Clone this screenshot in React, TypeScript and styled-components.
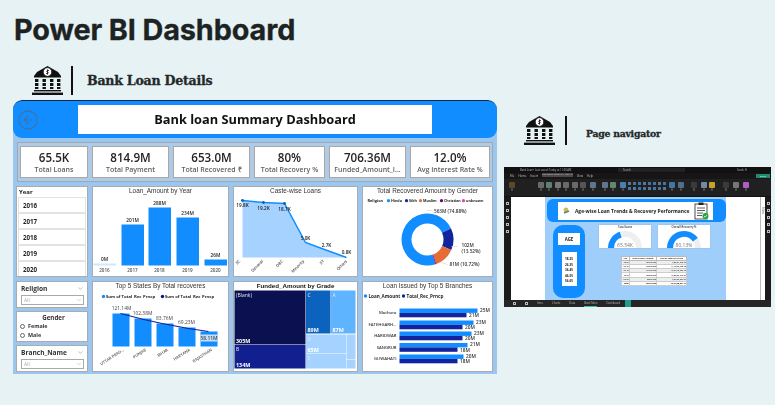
import * as React from 'react';
import styled, { createGlobalStyle } from 'styled-components';
import { ChevronDown, CircleArrowLeft } from 'lucide-react';

const BLUE = '#118dff';
const NAVY = '#12239e';
const LIGHT = '#a5d2ff';
const UI_FONT = '"Open Sans", "Liberation Sans", sans-serif';

const GlobalStyle = createGlobalStyle`
  html, body {
    margin: 0;
    padding: 0;
    background: #e6f2f3;
  }
  * { box-sizing: border-box; }
`;

const Page = styled.div`
  width: 775px;
  height: 405px;
  overflow: hidden;
  padding: 10px 4px 0 13px;
  font-family: ${UI_FONT};
`;

const PageTitle = styled.h1`
  margin: 0 0 0 1px;
  height: 40px;
  font: 700 28.8px/40px Inter, "Liberation Sans", sans-serif;
  letter-spacing: -0.1px;
  color: #1d2222;
  -webkit-text-stroke: 0.3px #1d2222;
`;

const Columns = styled.div`
  display: flex;
  gap: 7px;
  align-items: flex-start;
`;

const LeftColumn = styled.section`
  width: 484px;
`;

const RightColumn = styled.section`
  width: 267px;
  padding-top: 66px;
`;

const SectionHead = styled.div`
  display: flex;
  align-items: center;
  height: 50px;
  padding: 16px 0 5px 19px;
`;

const Divider = styled.div<{ $left: number; $right: number }>`
  width: 2px;
  height: 29px;
  margin: 0 ${(p) => p.$right}px 0 ${(p) => p.$left}px;
  background: #111;
`;

const SectionTitle = styled.h2<{ $size: number; $drop?: number }>`
  margin: ${(p) => p.$drop ?? 0}px 0 0;
  font: 700 ${(p) => p.$size}px "DejaVu Serif", "Liberation Serif", serif;
  letter-spacing: -0.25px;
  color: #24282a;
  -webkit-text-stroke: 0.3px #24282a;
`;

const RightHead = styled(SectionHead)`
  height: 29px;
  margin-bottom: 22px;
  padding: 0 0 0 20px;
`;

const BankIcon = () => (
  <svg width="31" height="29" viewBox="0 0 31 29" style={{ flex: 'none' }}>
    <path d="M15.5 0 L26 6 L29 10 L29 11.5 L2 11.5 L2 10 L5 6 Z" fill="#111" />
    <circle cx="15.5" cy="6" r="4.4" fill="#fff" stroke="#111" strokeWidth="1" />
    <path d="M15.5 3.4 V8.6 M17 4.6 C15 3.8 13.8 5.6 15.5 6 C17.2 6.4 16 8.2 14 7.4" stroke="#111" strokeWidth="0.8" fill="none" />
    {[3, 10.5, 18, 25].map((x) => (
      <path key={x} d="M0 13 H3.4 V16 H0 Z M0 17 H3.4 V20 H0 Z M0 21 H3.4 V23 H0 Z" transform={`translate(${x} 0)`} fill="#111" />
    ))}
    <rect x="2" y="24" width="27" height="1.4" fill="#111" />
    <rect x="0" y="26.6" width="31" height="2.4" fill="#111" />
  </svg>
);

/* dashboard shell */

const Dashboard = styled.div`
  width: 484px;
  height: 274px;
  background: #9cc6ee;
  border-radius: 9px 9px 0 0;
  overflow: hidden;
  filter: blur(0.4px);
`;

const Banner = styled.header`
  display: flex;
  align-items: center;
  height: 38px;
  padding-left: 4px;
  background: ${BLUE};
  border-top: 1px solid #10264a;
  border-radius: 9px;
`;

const BackButton = styled.div`
  display: flex;
  width: 61px;
  color: #44709d;
`;

const BannerTitle = styled.div`
  width: 354px;
  height: 29px;
  background: #fff;
  text-align: center;
  font: 700 12.8px/29px ${UI_FONT};
  color: #111;
`;

const KpiStrip = styled.div`
  display: flex;
  gap: 4px;
  width: 476px;
  height: 40px;
  margin: 4px 0 0 4px;
  padding: 3px 2px;
  background: #a9cdef;
  border: 1px solid #a3a8ad;
`;

const KpiCard = styled.div<{ $w: number }>`
  width: ${(p) => p.$w}px;
  height: 32px;
  padding-top: 3px;
  background: #fff;
  border: 1px solid #a8a8a8;
  box-shadow: 0 0 0 0.5px #c4c4c4;
  text-align: center;
  overflow: hidden;
`;

const KpiValue = styled.div`
  font: 600 11.6px/15px ${UI_FONT};
  color: #252423;
`;

const KpiLabel = styled.div`
  font: 600 7px/10px ${UI_FONT};
  color: #605e5c;
  white-space: nowrap;
`;

const MainGrid = styled.div`
  display: grid;
  grid-template-columns: 72px 137px 125px 131px;
  grid-template-rows: 91px 91px;
  gap: 4px;
  margin: 4px 0 0 3px;
`;

const Card = styled.div`
  background: #fff;
  border: 1.5px solid #a9acaf;
  overflow: hidden;
`;

const ChartTitle = styled.div<{ $strong?: boolean }>`
  height: 8px;
  text-align: center;
  white-space: nowrap;
  font: ${(p) => (p.$strong ? '700 6.2px' : '400 6.4px')}/8px "Liberation Sans", sans-serif;
  color: ${(p) => (p.$strong ? '#111' : '#333')};
`;

const ChartSvg = styled.svg`
  display: block;
`;

const Label = styled.text<{ $size?: number; $weight?: number; $color?: string }>`
  font-family: ${UI_FONT};
  font-size: ${(p) => p.$size ?? 5}px;
  font-weight: ${(p) => p.$weight ?? 600};
  fill: ${(p) => p.$color ?? '#252423'};
`;

/* slicers */

const YearList = styled.div`
  display: flex;
  flex-direction: column;
  padding: 1px 1px;
`;

const SlicerHead = styled.div`
  height: 9px;
  padding-left: 1px;
  font: 700 6px/9px ${UI_FONT};
  color: #252423;
`;

const YearItem = styled.div`
  height: 16px;
  padding-left: 4px;
  border: 1px solid #e3e3e3;
  font: 700 6.2px/15px ${UI_FONT};
  color: #252423;
`;

const FilterStack = styled.div`
  display: flex;
  flex-direction: column;
  gap: 3px;
`;

const DropSlicer = styled(Card)`
  height: 27px;
  padding: 1px 3px 0 4px;
`;

const DropHead = styled.div`
  display: flex;
  justify-content: space-between;
  align-items: center;
  height: 11px;
  font: 700 6.6px/11px ${UI_FONT};
  color: #333;
  svg { color: #999; }
`;

const DropBox = styled.div`
  display: flex;
  justify-content: space-between;
  align-items: center;
  height: 10px;
  margin-top: 1px;
  padding: 0 1px 0 2px;
  border: 1px solid #aaa;
  font: 400 5px/8px ${UI_FONT};
  color: #aaa;
`;

const GenderSlicer = styled(Card)`
  height: 31px;
  padding: 1px 0 0 3px;
`;

const GenderTitle = styled.div`
  text-align: center;
  font: 700 6.2px/9px ${UI_FONT};
  color: #333;
`;

const RadioRow = styled.div`
  display: flex;
  align-items: center;
  gap: 3px;
  height: 9px;
  font: 700 5.4px/9px ${UI_FONT};
  color: #333;
`;

const RadioDot = styled.span`
  width: 5px;
  height: 5px;
  border: 0.6px solid #666;
  border-radius: 50%;
`;

/* page navigator picture */

const AppWindow = styled.div`
  display: flex;
  flex-direction: column;
  width: 267px;
  height: 140px;
  background: #1b1b1b;
  filter: blur(0.45px);
  overflow: hidden;
`;

const TitleBar = styled.div`
  display: flex;
  align-items: center;
  height: 6px;
  padding: 0 3px 0 3px;
  background: #111;
  font: 400 2.6px/6px ${UI_FONT};
  color: #b5b5b5;
`;

const TitleText = styled.span`
  width: 111px;
  padding-left: 13px;
  white-space: nowrap;
`;

const SearchBox = styled.span`
  width: 67px;
  height: 4px;
  padding-left: 5px;
  background: #222;
  line-height: 4px;
`;

const UserBits = styled.span`
  margin-left: 52px;
  white-space: nowrap;
`;

const MenuRow = styled.div`
  position: relative;
  display: flex;
  gap: 4px;
  height: 6px;
  padding-left: 6px;
  background: #161616;
  font: 400 2.8px/6px ${UI_FONT};
  color: #c8c8c8;
`;

const SaveTip = styled.span`
  width: 31px;
  height: 4px;
  background: #4a4a4a;
  font-size: 2.2px;
  line-height: 4px;
  text-align: center;
  white-space: nowrap;
`;

const ShareButton = styled.span`
  position: absolute;
  right: 1px;
  top: 1px;
  width: 14px;
  height: 4px;
  background: #1f8a70;
  font-size: 2.4px;
  line-height: 4px;
  text-align: center;
  color: #dff;
`;

const Ribbon = styled.div`
  display: flex;
  height: 18px;
  padding-top: 2px;
  background: #202020;
  border-bottom: 1px solid #111;
`;

const RibbonTool = styled.div<{ $c: string; $gap: number }>`
  width: 6px;
  height: 6px;
  margin: 1px 0 0 ${(p) => p.$gap}px;
  background: ${(p) => p.$c};
  border-radius: 1px;
  box-shadow: 0 4.5px 0 -2px #5c5c5c;
  flex: none;
`;

const RibbonGrid = styled.div`
  display: grid;
  grid-template-columns: repeat(8, 3px);
  grid-auto-rows: 3px;
  gap: 2px;
  margin: 1px 0 0 2px;
  flex: none;
`;

const RibbonDot = styled.i<{ $c: string }>`
  display: block;
  background: ${(p) => p.$c};
`;

const WorkArea = styled.div`
  display: flex;
  height: 103px;
`;

const SideRail = styled.div<{ $w: number }>`
  display: flex;
  flex-direction: column;
  align-items: center;
  gap: 4px;
  width: ${(p) => p.$w}px;
  padding-top: 5px;
  background: #1b1b1b;
  flex: none;
`;

const RailIcon = styled.i`
  display: block;
  width: 3px;
  height: 3px;
  border: 0.6px solid #bbb;
  flex: none;
`;

const ReportPage = styled.div`
  position: relative;
  display: flex;
  width: 254px;
  padding-left: 34px;
  background: #fff;
`;

const FiltersPane = styled.div`
  position: absolute;
  top: 0;
  right: 0;
  width: 5px;
  height: 100%;
  padding-top: 10px;
  border-left: 0.5px solid #bbb;
  writing-mode: vertical-rl;
  font: 400 2.6px/4px ${UI_FONT};
  color: #555;
`;

const BlueCanvas = styled.div`
  width: 181px;
  background: #9fcefb;
  padding: 2px 0 0 2px;
`;

const MiniBanner = styled.div`
  display: flex;
  align-items: center;
  width: 179px;
  height: 23px;
  padding-left: 11px;
  background: ${BLUE};
  border-radius: 6px;
`;

const MiniTitleBox = styled.div`
  display: flex;
  align-items: center;
  width: 155px;
  height: 18px;
  padding-left: 5px;
  background: #fff;
  font: 700 4.9px/18px ${UI_FONT};
  color: #222;
  white-space: nowrap;
`;

const MiniTitle = styled.span`
  margin-left: 5px;
  width: 120px;
`;

const MiniBody = styled.div`
  display: flex;
  margin: 3px 0 0 6px;
`;

const AgePill = styled.div`
  display: flex;
  flex-direction: column;
  align-items: center;
  width: 32px;
  height: 73px;
  padding-top: 8px;
  background: ${BLUE};
  border-radius: 10px;
  flex: none;
`;

const AgeBox = styled.div`
  width: 22px;
  height: 12px;
  background: #fff;
  text-align: center;
  font: 700 4.4px/12px ${UI_FONT};
  color: #222;
`;

const AgeList = styled.div`
  width: 15px;
  height: 34px;
  margin-top: 7px;
  padding-top: 5px;
  background: #fff;
  text-align: center;
  font: 700 3.1px/5.6px ${UI_FONT};
  color: #222;
`;

const MiniContent = styled.div`
  display: flex;
  flex-direction: column;
  margin-left: 14px;
`;

const GaugeRow = styled.div`
  display: flex;
  gap: 7px;
`;

const GaugeCard = styled.div`
  width: 52px;
  height: 23px;
  background: #fff;
  box-shadow: 0 0 1px #999;
  text-align: center;
  font: 600 2.7px/4px ${UI_FONT};
  color: #333;
  overflow: hidden;
`;

const MiniTable = styled.table`
  width: 66px;
  height: 30px;
  margin: 8px 0 0 22px;
  border-collapse: collapse;
  background: #eee;
  font: 700 2px/3px ${UI_FONT};
  color: #444;
  th { background: #fff; color: #222; border: 0.3px solid #bbb; padding: 0; white-space: nowrap; }
  td { border: 0.3px solid #ccc; padding: 0; text-align: right; }
  tr:nth-child(even) td { background: #fff; }
  tr:last-child td { background: #fff; color: #222; }
`;

const BottomBar = styled.div`
  display: flex;
  align-items: center;
  gap: 9px;
  height: 7px;
  padding-left: 9px;
  background: #262626;
  font: 400 2.7px/7px ${UI_FONT};
  color: #bbb;
`;

const PageTab = styled.span<{ $active?: boolean }>`
  height: 7px;
  border-bottom: ${(p) => (p.$active ? '0.7px solid #2ec4a5' : 'none')};
`;

const AddTab = styled.span`
  width: 6px;
  height: 7px;
  margin-left: -4px;
  background: #1f9d86;
`;

/* chart helpers */

function svgBox(x: number, y: number, w: number, h: number) {
  return { viewBox: `${x} ${y} ${w} ${h}`, width: w, height: h };
}

function arc(cx: number, cy: number, r0: number, r1: number, a0: number, a1: number) {
  const pt = (r: number, a: number) => {
    const t = (a * Math.PI) / 180;
    return `${(cx + r * Math.sin(t)).toFixed(2)} ${(cy - r * Math.cos(t)).toFixed(2)}`;
  };
  const large = a1 - a0 > 180 ? 1 : 0;
  return `M${pt(r1, a0)} A${r1} ${r1} 0 ${large} 1 ${pt(r1, a1)} L${pt(r0, a1)} A${r0} ${r0} 0 ${large} 0 ${pt(r0, a0)} Z`;
}

const YearBars = () => {
  const bars = [
    { x: 94, top: 264, year: '2016', v: '0M', fill: '#cfe7ff', ly: 261 },
    { x: 122, top: 225, year: '2017', v: '201M', fill: BLUE, ly: 222.5 },
    { x: 149, top: 208, year: '2018', v: '288M', fill: BLUE, ly: 205.5 },
    { x: 177, top: 218, year: '2019', v: '234M', fill: BLUE, ly: 215.5 },
    { x: 205, top: 260, year: '2020', v: '26M', fill: BLUE, ly: 257.5 },
  ];
  return (
    <ChartSvg {...svgBox(93.5, 195.5, 134, 80)}>
      {bars.map((b) => (
        <g key={b.year}>
          <rect x={b.x} y={b.top} width="22.5" height={266 - b.top} fill={b.fill} />
          <Label x={b.x + 11} y={b.ly} textAnchor="middle" $size={4.8}>{b.v}</Label>
          <Label x={b.x + 11} y={272} textAnchor="middle" $size={4.6} $color="#555">{b.year}</Label>
        </g>
      ))}
    </ChartSvg>
  );
};

const CasteArea = () => {
  const pts = [[243, 201], [264, 203], [285, 204], [306, 243], [325, 250], [347, 258]];
  const line = pts.map((p) => p.join(' ')).join(' L');
  const labels = [
    ['19.8K', 243, 207.5], ['19.2K', 264, 210.5], ['18.7K', 285, 211.5],
    ['5.0K', 306, 240.5], ['2.7K', 327, 247.5], ['0.8K', 347, 254.5],
  ] as const;
  const axis = [
    ['SC', 241, 262], ['General', 264, 262], ['OBC', 284, 262],
    ['Minority', 305, 262], ['ST', 325, 262], ['Others', 348, 262],
  ] as const;
  return (
    <ChartSvg {...svgBox(234.5, 195.5, 122, 80)}>
      <path d={`M${line} L243 258 Z`} fill={LIGHT} />
      <path d={`M${line}`} fill="none" stroke={BLUE} strokeWidth="1.5" />
      {pts.slice(0, 3).map((p) => (
        <circle key={p[0]} cx={p[0]} cy={p[1]} r="1.4" fill="#0f5fb0" />
      ))}
      {labels.map(([t, x, y]) => (
        <Label key={t} x={x} y={y} textAnchor="middle" $size={4.7} $color="#222">{t}</Label>
      ))}
      {axis.map(([t, x, y]) => (
        <Label key={t} x={x} y={y} textAnchor="end" $size={4} $color="#444" transform={`rotate(-45 ${x} ${y})`}>{t}</Label>
      ))}
    </ChartSvg>
  );
};

const GenderDonut = () => {
  const legend = [
    ['Hindu', 389, BLUE], ['Sikh', 407, NAVY], ['Muslim', 421, '#e66c37'],
    ['Christian', 442, '#6b007b'], ['unknown', 464, '#e044a7'],
  ] as const;
  return (
    <ChartSvg {...svgBox(363.5, 195.5, 128, 80)}>
      <Label x={368} y={202.7} $size={3.9} $weight={700}>Religion</Label>
      {legend.map(([t, x, c]) => (
        <g key={t}>
          <circle cx={x} cy={201.2} r="1.6" fill={c} />
          <Label x={x + 2.5} y={202.7} $size={3.7} $weight={700}>{t}</Label>
        </g>
      ))}
      <path d={arc(428, 240, 16, 26, -198, 65)} fill={BLUE} />
      <path d={arc(428, 240, 16, 26, 65, 114)} fill={NAVY} />
      <path d={arc(428, 240, 16, 26, 114, 160)} fill="#e66c37" />
      <path d={arc(428, 240, 16, 26, 160, 162)} fill="#6b007b" />
      <path d="M427 211 L433 211 M452 247 L458 247 M442 263 L448 265" stroke="#ddd" strokeWidth="0.8" fill="none" />
      <Label x={434.5} y={213} $size={4.7} $color="#333">563M (74.88%)</Label>
      <Label x={462} y={247} $size={4.7} $color="#333">102M</Label>
      <Label x={462} y={253} $size={4.7} $color="#333">(13.52%)</Label>
      <Label x={450} y={266.5} $size={4.7} $color="#333">81M (10.72%)</Label>
    </ChartSvg>
  );
};

const StateBars = () => {
  const bars = [
    { x: 113, top: 314, v: '121.14M', lx: 122, ly: 310.5, name: 'UTTAR PRAD...' },
    { x: 135, top: 319, v: '102.38M', lx: 143, ly: 315, name: 'PUNJAB' },
    { x: 157, top: 324, v: '83.76M', lx: 165, ly: 320, name: 'BIHAR' },
    { x: 179, top: 328, v: '69.23M', lx: 187, ly: 324, name: 'HARYANA' },
    { x: 201, top: 332, v: '', lx: 0, ly: 0, name: 'RAJASTHAN' },
  ];
  return (
    <ChartSvg {...svgBox(93.5, 290.5, 134, 80)}>
      <circle cx="104" cy="297" r="1.7" fill={BLUE} />
      <Label x={106.5} y={298.7} $size={4.2} $weight={700}>Sum of Total_Rec_Prncp</Label>
      <circle cx="163" cy="297" r="1.7" fill="#0a148a" />
      <Label x={165.5} y={298.7} $size={4.2} $weight={700}>Sum of Total_Rec_Prncp</Label>
      {bars.map((b) => (
        <g key={b.name}>
          <rect x={b.x} y={b.top} width="17" height={347 - b.top} fill={BLUE} />
          {b.v && <Label x={b.lx} y={b.ly} textAnchor="middle" $size={4.9} $weight={400} $color="#444">{b.v}</Label>}
          <Label x={b.x + 12} y={351} textAnchor="end" $size={4} $color="#555" transform={`rotate(-33 ${b.x + 12} 351)`}>{b.name}</Label>
        </g>
      ))}
      <rect x="201" y="335" width="17" height="7" fill="#c4e0fb" />
      <Label x={209.5} y={340.5} textAnchor="middle" $size={4.9} $color="#444">58.11M</Label>
      <path d="M121 314 C150 322 180 328 209 332" fill="none" stroke={NAVY} strokeWidth="1.1" />
    </ChartSvg>
  );
};

const GradeTreemap = () => {
  const cells = [
    { x: 235, y: 291, w: 71, h: 54, c: '#0a1050', name: '(Blank)', v: '305M' },
    { x: 235, y: 345.5, w: 71, h: 23.5, c: '#121f8f', name: 'B', v: '134M' },
    { x: 306.5, y: 291, w: 24.5, h: 43, c: '#0b63bd', name: 'C', v: '89M' },
    { x: 331.5, y: 291, w: 24.5, h: 43, c: '#5fb4ff', name: 'A', v: '87M' },
    { x: 306.5, y: 335, w: 40, h: 19, c: LIGHT, name: 'D', v: '65M' },
    { x: 306.5, y: 354.5, w: 40, h: 14.5, c: LIGHT, name: 'E', v: '' },
    { x: 347, y: 335, w: 9, h: 25, c: LIGHT, name: '', v: '' },
    { x: 347, y: 360.5, w: 9, h: 8.5, c: LIGHT, name: '', v: '' },
  ];
  return (
    <ChartSvg {...svgBox(234.5, 290.5, 122, 80)}>
      {cells.map((c) => (
        <g key={`${c.x}-${c.y}`}>
          <rect x={c.x} y={c.y} width={c.w} height={c.h} fill={c.c} />
          {c.name && <Label x={c.x + 1.5} y={c.y + 6} $size={5} $weight={400} $color="#dfe8f5">{c.name}</Label>}
          {c.v && <Label x={c.x + 1.5} y={c.y + c.h - 1.5} $size={5.4} $weight={700} $color="#fff">{c.v}</Label>}
        </g>
      ))}
    </ChartSvg>
  );
};

const BranchBars = () => {
  const rows = [
    { name: 'Mathura', y: 309, a: 478, b: 467, av: '25M', bv: '21M' },
    { name: 'FATEHGARH...', y: 321, a: 474, b: 463, av: '23M', bv: '20M' },
    { name: 'HARIDWAR', y: 332, a: 472, b: 463, av: '23M', bv: '20M' },
    { name: 'SANGRUR', y: 343.5, a: 468, b: 458, av: '21M', bv: '18M' },
    { name: 'GUWAHATI', y: 355, a: 464, b: 458, av: '20M', bv: '18M' },
  ];
  return (
    <ChartSvg {...svgBox(363.5, 290.5, 128, 80)}>
      <circle cx="366" cy="296.5" r="1.7" fill={BLUE} />
      <Label x={369} y={298.2} $size={4.6} $weight={700}>Loan_Amount</Label>
      <circle cx="404" cy="296.5" r="1.7" fill={NAVY} />
      <Label x={407} y={298.2} $size={4.6} $weight={700}>Total_Rec_Prncp</Label>
      {rows.map((r) => (
        <g key={r.name}>
          <rect x="400" y={r.y} width={r.a - 400} height="4.4" fill={BLUE} />
          <rect x="400" y={r.y + 4.4} width={r.b - 400} height="4.4" fill={NAVY} />
          <Label x={397} y={r.y + 5.8} textAnchor="end" $size={4.2} $color="#333">{r.name}</Label>
          <Label x={r.a + 2.5} y={r.y + 3} $size={4.8} $color="#333">{r.av}</Label>
          <Label x={r.b + 2.5} y={r.y + 8.6} $size={4.8} $color="#333">{r.bv}</Label>
        </g>
      ))}
    </ChartSvg>
  );
};

const Gauge = ({ value, sweep }: { value: string; sweep: number }) => (
  <svg width="52" height="19" viewBox="0 0 52 19" style={{ display: 'block' }}>
    <path d={arc(26, 19, 11, 17, -90, 90)} fill="#efefef" />
    <path d={arc(26, 19, 11, 17, -90, -90 + sweep)} fill={BLUE} />
    <Label x={26} y={18} textAnchor="middle" $size={5} $weight={400} $color="#777">{value}</Label>
  </svg>
);

const ClipboardIcon = () => (
  <svg width="15" height="18" viewBox="0 0 15 18" style={{ flex: 'none', marginLeft: -1 }}>
    <rect x="1" y="2" width="12" height="15" fill="#fff" stroke="#222" strokeWidth="0.8" />
    <rect x="4.5" y="0.5" width="5" height="2.5" fill="#222" />
    <path d="M3 6 H11 M3 8.5 H11 M3 11 H9 M3 13.5 H8" stroke="#333" strokeWidth="0.8" />
    <circle cx="11.5" cy="14" r="3" fill="#22a83a" />
    <path d="M10 14 L11.2 15.2 L13 13" stroke="#fff" strokeWidth="0.7" fill="none" />
  </svg>
);

const TOOLS_LEFT = [
  { gap: 5, c: '#5a4a25' }, { gap: 23, c: '#6a6a6a' }, { gap: 2, c: '#5f7f70' },
  { gap: 3, c: '#777' }, { gap: 2, c: '#6a6a6a' }, { gap: 3, c: '#6a6a6a' },
  { gap: 2, c: '#555' }, { gap: 4, c: '#5f7590' }, { gap: 6, c: '#5f7590' },
  { gap: 2, c: '#5f8a70' }, { gap: 4, c: '#4a7fb5' },
];
const TOOLS_RIGHT = [
  { gap: 3, c: '#3f75a8' }, { gap: 3, c: '#4f6f8f' }, { gap: 7, c: '#3a3a3a' },
  { gap: 4, c: '#6f8aa8' }, { gap: 2, c: '#c9a227' }, { gap: 8, c: '#3a3a3a' },
  { gap: 4, c: '#777' }, { gap: 4, c: '#b25bc9' },
];
const GRID_DOTS = Array.from({ length: 16 }, (_, i) => (i % 3 === 0 ? '#5f7590' : '#3f75a8'));

const YEARS = ['2016', '2017', '2018', '2019', '2020'];
const KPIS = [
  { w: 68, value: '65.5K', label: 'Total Loans' },
  { w: 77, value: '814.9M', label: 'Total Payment' },
  { w: 77, value: '653.0M', label: 'Total Recovered ₹' },
  { w: 71, value: '80%', label: 'Total Recovery %' },
  { w: 77, value: '706.36M', label: 'Funded_Amount_I...' },
  { w: 80, value: '12.0%', label: 'Avg Interest Rate %' },
];
const AGE_ROWS = [
  ['18-25', '109975420', '7,85,51,945.36'],
  ['26-35', '138725900', '11,48,62,768.78'],
  ['36-45', '141227475', '10,29,12,757.45'],
  ['46-55', '168550775', '10,88,63,616.77'],
  ['56-65', '98527400', '9,60,23,057.37'],
];

const App = () => (
  <Page>
    <GlobalStyle />
    <PageTitle>Power BI Dashboard</PageTitle>
    <Columns>
      <LeftColumn>
        <SectionHead>
          <BankIcon />
          <Divider $left={8} $right={14} />
          <SectionTitle $size={12.6}>Bank Loan Details</SectionTitle>
        </SectionHead>
        <Dashboard>
          <Banner>
            <BackButton>
              <CircleArrowLeft size={22} strokeWidth={1.2} />
            </BackButton>
            <BannerTitle>Bank loan Summary Dashboard</BannerTitle>
          </Banner>
          <KpiStrip>
            {KPIS.map((k) => (
              <KpiCard key={k.label} $w={k.w}>
                <KpiValue>{k.value}</KpiValue>
                <KpiLabel>{k.label}</KpiLabel>
              </KpiCard>
            ))}
          </KpiStrip>
          <MainGrid>
            <Card>
              <YearList>
                <SlicerHead>Year</SlicerHead>
                {YEARS.map((y) => <YearItem key={y}>{y}</YearItem>)}
              </YearList>
            </Card>
            <Card>
              <ChartTitle>Loan_Amount by Year</ChartTitle>
              <YearBars />
            </Card>
            <Card>
              <ChartTitle>Caste-wise Loans</ChartTitle>
              <CasteArea />
            </Card>
            <Card>
              <ChartTitle>Total Recovered Amount by Gender</ChartTitle>
              <GenderDonut />
            </Card>
            <FilterStack>
              <DropSlicer>
                <DropHead>Religion<ChevronDown size={7} /></DropHead>
                <DropBox>All<ChevronDown size={6} /></DropBox>
              </DropSlicer>
              <GenderSlicer>
                <GenderTitle>Gender</GenderTitle>
                <RadioRow><RadioDot />Female</RadioRow>
                <RadioRow><RadioDot />Male</RadioRow>
              </GenderSlicer>
              <DropSlicer>
                <DropHead>Branch_Name<ChevronDown size={7} /></DropHead>
                <DropBox>All<ChevronDown size={6} /></DropBox>
              </DropSlicer>
            </FilterStack>
            <Card>
              <ChartTitle>Top 5 States By Total recoveres</ChartTitle>
              <StateBars />
            </Card>
            <Card>
              <ChartTitle $strong>Funded_Amount by Grade</ChartTitle>
              <GradeTreemap />
            </Card>
            <Card>
              <ChartTitle>Loan Issued by Top 5 Branches</ChartTitle>
              <BranchBars />
            </Card>
          </MainGrid>
        </Dashboard>
      </LeftColumn>
      <RightColumn>
        <RightHead>
          <BankIcon />
          <Divider $left={10} $right={19} />
          <SectionTitle $size={9.3} $drop={5}>Page navigator</SectionTitle>
        </RightHead>
        <AppWindow>
          <TitleBar>
            <TitleText>Bank Loan • Last saved: Today at 11:00 AM</TitleText>
            <SearchBox>Search</SearchBox>
            <UserBits>Sarah H</UserBits>
          </TitleBar>
          <MenuRow>
            <span>File</span><span>Home</span><span>Insert</span>
            <SaveTip>Last saved: Today at 11:00 AM</SaveTip>
            <span>View</span><span>Help</span>
            <ShareButton>Share</ShareButton>
          </MenuRow>
          <Ribbon>
            {TOOLS_LEFT.map((t, i) => <RibbonTool key={i} $c={t.c} $gap={t.gap} />)}
            <RibbonGrid>
              {GRID_DOTS.map((c, i) => <RibbonDot key={i} $c={c} />)}
            </RibbonGrid>
            {TOOLS_RIGHT.map((t, i) => <RibbonTool key={i} $c={t.c} $gap={t.gap} />)}
          </Ribbon>
          <WorkArea>
            <SideRail $w={7}>
              {[0, 1, 2, 3, 4].map((i) => <RailIcon key={i} />)}
            </SideRail>
            <ReportPage>
              <BlueCanvas>
                <MiniBanner>
                  <MiniTitleBox>
                    <svg width="7" height="7" viewBox="0 0 7 7" style={{ flex: 'none' }}>
                      <circle cx="3" cy="3" r="2.4" fill="#d9b64a" />
                      <path d="M1 6 L6 4" stroke="#3f8f8f" strokeWidth="1.4" />
                    </svg>
                    <MiniTitle>Age-wise Loan Trends &amp; Recovery Performance</MiniTitle>
                    <ClipboardIcon />
                  </MiniTitleBox>
                </MiniBanner>
                <MiniBody>
                  <AgePill>
                    <AgeBox>AGE</AgeBox>
                    <AgeList>
                      {['18-25', '26-35', '36-45', '46-55', '56-65'].map((a) => <div key={a}>{a}</div>)}
                    </AgeList>
                  </AgePill>
                  <MiniContent>
                    <GaugeRow>
                      <GaugeCard>
                        Total loans
                        <Gauge value="65.54K" sweep={72} />
                      </GaugeCard>
                      <GaugeCard>
                        Overall Recovery %
                        <Gauge value="80.13%" sweep={144} />
                      </GaugeCard>
                    </GaugeRow>
                    <MiniTable>
                      <thead>
                        <tr><th>Age</th><th>Sum of Loan Amount</th><th>Sum of Total Rec Prncp</th></tr>
                      </thead>
                      <tbody>
                        {AGE_ROWS.map((r) => (
                          <tr key={r[0]}>{r.map((c) => <td key={c}>{c}</td>)}</tr>
                        ))}
                        <tr><td>Total</td><td>706361700</td><td>65,30,68,061.47</td></tr>
                      </tbody>
                    </MiniTable>
                  </MiniContent>
                </MiniBody>
              </BlueCanvas>
              <FiltersPane>Filters</FiltersPane>
            </ReportPage>
            <SideRail $w={6}>
              {[0, 1, 2, 3, 4].map((i) => <RailIcon key={i} />)}
            </SideRail>
          </WorkArea>
          <BottomBar>
            <RailIcon />
            <RailIcon />
            <PageTab>Intro</PageTab>
            <PageTab>Charts</PageTab>
            <PageTab>Data</PageTab>
            <PageTab $active>Bank Main</PageTab>
            <PageTab>Dashboard</PageTab>
            <AddTab />
          </BottomBar>
        </AppWindow>
      </RightColumn>
    </Columns>
  </Page>
);

export default App;
